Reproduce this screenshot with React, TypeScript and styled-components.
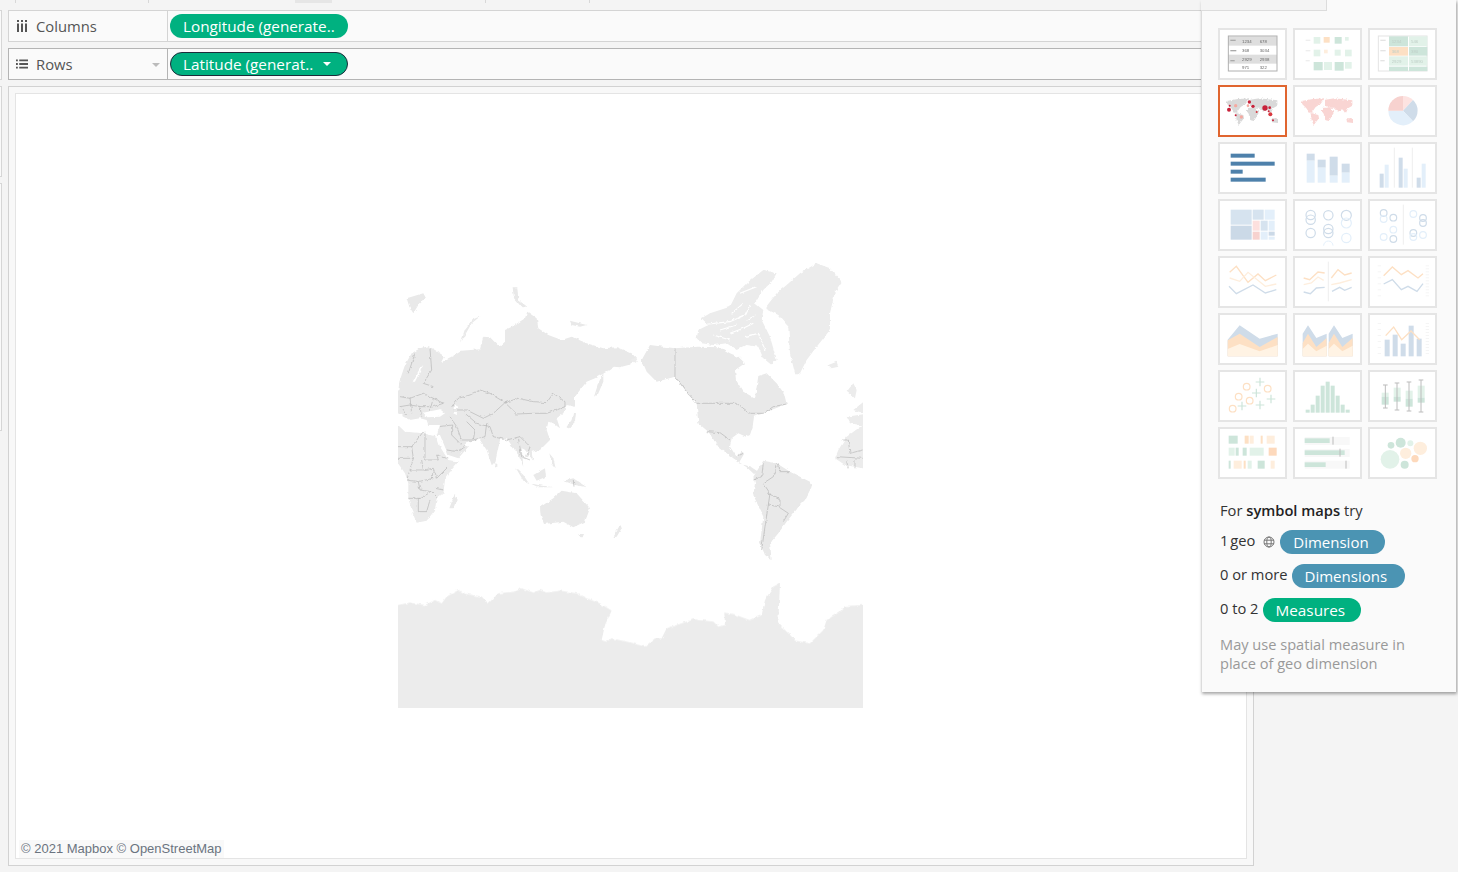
import React from 'react';
import styled, { createGlobalStyle } from 'styled-components';

const GlobalStyle = createGlobalStyle`
	html, body {
		margin: 0;
		padding: 0;
		background: #f4f4f4;
		font-family: "Open Sans", "Liberation Sans", sans-serif;
	}
`;

const Page = styled.div`
	position: relative;
	width: 1458px;
	height: 872px;
	overflow: hidden;
	background: #f4f4f4;
`;

const TopStrip = styled.div`
	display: flex;
	height: 10px;
`;

const TopCell = styled.div<{ $w: number }>`
	width: ${(p) => p.$w}px;
	height: 3px;
	box-sizing: border-box;
	border-right: 1px solid #d8d8d8;
`;

const TopMark = styled.div`
	width: 37px;
	height: 3px;
	margin-left: 146px;
	background: #e6e6e6;
`;

const Layout = styled.div`
	display: flex;
`;

const Rail = styled.div`
	width: 8px;
	display: flex;
	flex-direction: column;
	gap: 6px;
`;

const RailBlock = styled.div<{ $h: number }>`
	width: 2px;
	height: ${(p) => p.$h}px;
	box-sizing: border-box;
	background: #fafafa;
	border: 1px solid #d6d6d6;
	border-left: 0;
`;

const Main = styled.div`
	width: 1246px;
	display: flex;
	flex-direction: column;
	gap: 6px;
`;

const Shelf = styled.div<{ $active?: boolean }>`
	display: flex;
	height: 32px;
	box-sizing: border-box;
	background: #fafafa;
	border: 1px solid ${(p) => (p.$active ? '#b4b4b4' : '#d4d4d4')};
	border-right: 0;
`;

const ShelfLabel = styled.div<{ $active?: boolean }>`
	position: relative;
	width: 159px;
	box-sizing: border-box;
	display: flex;
	align-items: center;
	gap: 8px;
	padding-left: 7px;
	border-right: 1px solid ${(p) => (p.$active ? '#b4b4b4' : '#d4d4d4')};
	color: #555;
	font-size: 14.8px;
	svg {
		flex: none;
	}
`;

const Caret = styled.span`
	position: absolute;
	right: 7px;
	top: 14px;
	border-left: 4px solid transparent;
	border-right: 4px solid transparent;
	border-top: 4px solid #bbb;
`;

const ShelfBody = styled.div`
	flex: 1;
	display: flex;
	align-items: center;
	padding-left: 2px;
`;

const Pill = styled.div<{ $w: number; $blue?: boolean; $focus?: boolean }>`
	position: relative;
	width: ${(p) => p.$w}px;
	height: 24px;
	box-sizing: border-box;
	flex: none;
	display: flex;
	align-items: center;
	padding-left: ${(p) => (p.$focus ? 12 : 13)}px;
	border-radius: 12px;
	border: ${(p) => (p.$focus ? '1px solid #1d2b3a' : '0')};
	background: ${(p) => (p.$blue ? '#4b94b3' : '#00b180')};
	color: #fff;
	font-size: ${(p) => (p.$blue ? 15 : 15.3)}px;
	line-height: 24px;
	white-space: nowrap;
`;

const PillCaret = styled.span`
	position: absolute;
	right: 16px;
	top: 9px;
	border-left: 4px solid transparent;
	border-right: 4px solid transparent;
	border-top: 4px solid #fff;
`;

const Frame = styled.div`
	height: 780px;
	box-sizing: border-box;
	padding: 6px;
	border: 1px solid #d2d2d2;
	background: #f8f8f8;
`;

const Canvas = styled.div`
	position: relative;
	height: 100%;
	box-sizing: border-box;
	display: flex;
	justify-content: center;
	padding: 168px 2px 0 0;
	background: #fff;
	border: 1px solid #e4e4e4;
`;

const WorldMap = styled.svg`
	display: block;
	width: 465px;
	height: 446px;
`;

const Attribution = styled.div`
	position: absolute;
	left: 3px;
	bottom: 0;
	padding: 0 2px;
	background: #f9f9f9;
	color: #6b7480;
	font-family: "Liberation Sans", Arial, sans-serif;
	font-size: 13px;
	line-height: 18px;
`;

const ShowMe = styled.aside`
	position: absolute;
	left: 1201px;
	top: 0;
	width: 255px;
	height: 692px;
	box-sizing: border-box;
	padding: 28px 0 0 16px;
	background: #fafafa;
	border-left: 1px solid #dcdcdc;
	box-shadow: 1px 2px 3px rgba(0, 0, 0, 0.35);
`;

const ShowMeTab = styled.div`
	position: absolute;
	left: -1px;
	top: 0;
	width: 126px;
	height: 11px;
	box-sizing: border-box;
	background: #f4f4f4;
	border-right: 1px solid #dcdcdc;
	border-bottom: 1px solid #dcdcdc;
`;

const ThumbGrid = styled.div`
	display: grid;
	grid-template-columns: repeat(3, 69px);
	grid-auto-rows: 52px;
	column-gap: 6px;
	row-gap: 5px;
`;

const Tile = styled.div<{ $selected?: boolean }>`
	box-sizing: border-box;
	background: #fff;
	border: 2px solid ${(p) => (p.$selected ? '#e0652f' : '#e5e5e5')};
	svg {
		display: block;
		margin: -2px;
		width: 69px;
		height: 52px;
		filter: blur(0.35px);
	}
`;

const Hints = styled.div`
	margin-top: 19px;
	padding-left: 2px;
	display: flex;
	flex-direction: column;
	gap: 10px;
	color: #333;
	font-size: 14.7px;
`;

const HintRow = styled.div`
	display: flex;
	align-items: flex-start;
	gap: 4px;
	height: 24px;
	line-height: 21px;
	white-space: nowrap;
	b {
		font-weight: 600;
		color: #222;
	}
`;

const HintTitle = styled(HintRow)`
	display: block;
	line-height: 24px;
	margin-bottom: -2px;
`;

const GeoLabel = styled.span`
	word-spacing: -2px;
`;

const GeoIcon = styled.svg`
	width: 12px;
	height: 12px;
	margin: 6px 1px 0 4px;
`;

const Note = styled.div`
	margin-top: 3px;
	color: #999;
	font-size: 14.6px;
	line-height: 19px;
`;

const land = '#e9e9e9';
const line = '#a9a9a9';

// shapes are traced in 3x crop space, then scaled down with the group transform
const eurasia =
	'M0,432 L24,432 L28,395 L45,345 L65,310 L90,295 L115,288 L135,300 L165,320 L155,340 L175,325 L195,315 L215,302 L270,298 L280,260 L300,262 L328,290 L345,275 L345,240 L370,228 L405,205 L412,185 L440,205 L445,235 L475,255 L515,270 L545,260 L590,280 L640,295 L680,292 L725,310 L742,328 L715,345 L690,352 L672,350 L650,365 L615,385 L590,395 L570,420 L555,440 L555,470 L530,465 L520,490 L500,505 L510,535 L490,520 L475,515 L470,540 L480,570 L450,600 L425,605 L430,632 L405,600 L395,590 L400,650 L385,615 L350,565 L330,570 L315,640 L305,645 L290,600 L270,570 L235,575 L222,585 L235,590 L205,625 L175,615 L150,555 L140,555 L150,525 L115,525 L110,510 L90,505 L60,510 L40,500 L24,490 L0,490 Z';
const africa =
	'M0,525 L24,525 L45,545 L100,550 L140,560 L150,590 L175,630 L205,635 L180,665 L165,690 L160,730 L140,745 L135,780 L110,812 L80,818 L68,790 L55,745 L55,700 L45,670 L24,640 L0,640 Z';
const asiaIslands = [
	'M530,530 L545,510 L550,485 L558,490 L555,515 L535,538 Z',
	'M612,440 L625,400 L640,368 L640,395 L625,430 Z',
	'M212,280 L225,240 L250,208 L272,198 L245,220 L228,250 Z',
	'M50,145 L100,130 L108,145 L85,165 L70,190 L58,170 Z',
	'M368,112 L382,112 L385,150 L412,170 L395,172 L372,145 Z',
	'M540,212 L590,225 L570,230 L545,225 Z',
	'M316,640 L322,642 L322,655 L316,652 Z',
	'M178,775 L195,730 L202,745 L190,775 Z',
	'M478,610 L490,625 L497,655 L485,640 Z',
	'M430,675 L465,655 L468,680 L440,692 Z',
	'M378,655 L400,675 L418,702 L402,695 Z',
	'M420,700 L445,705 L490,712 L445,712 Z',
	'M520,692 L550,685 L590,712 L555,705 Z',
	'M450,772 L490,745 L515,722 L560,730 L600,775 L585,815 L550,832 L520,815 L462,822 L452,795 Z',
	'M568,852 L582,852 L578,862 L572,862 Z',
	'M670,862 L692,825 L695,835 L680,860 Z',
];
const asiaBorders =
	'M185,470 L205,445 L240,435 L270,420 L300,430 L345,458 L385,445 L430,455 L470,458 L490,430 L525,455 L525,470 L500,480 L470,490 L430,490 L380,492 L345,458 M190,480 L230,480 L280,505 L310,490 L345,458 M225,490 L260,520 L300,530 L310,560 L350,570 L390,560 L420,590 L410,620 M180,500 L200,530 L215,570 L250,570 L255,540 L230,515 M250,570 L285,560 L290,520 M150,530 L185,525 L185,555 L215,585 M170,600 L205,605 L225,590 M75,310 L55,370 M120,295 L125,360 L100,400 L130,410 M30,440 L60,445 L100,430 L130,445 L160,460 L130,470 L90,470 L60,465 L30,470 M60,445 L65,490 M90,470 L95,500 M130,445 L120,480 M30,470 L50,495 M385,565 L395,620 L420,630 M550,690 L552,710';
const africaBorders =
	'M24,590 L65,590 L100,545 M105,548 L105,630 L145,630 L140,615 L170,625 M65,590 L70,625 L24,625 M70,625 L60,660 L100,660 L95,630 M100,660 L130,655 L140,685 L175,650 M60,660 L50,690 L85,695 L130,685 M85,695 L90,720 L125,725 L140,740 M55,745 L90,745 L125,725 M85,745 L85,785 L110,785 L120,750 M135,715 L160,720 M130,660 L125,690';
const northAmerica =
	'M35,330 L60,285 L135,295 L205,290 L270,292 L300,310 L325,320 L345,340 L315,360 L318,390 L340,425 L375,445 L385,378 L410,370 L440,400 L462,430 L470,462 L430,478 L400,490 L372,500 L368,530 L360,555 L348,560 L325,550 L305,565 L300,590 L320,620 L335,605 L342,612 L326,640 L362,650 L385,665 L372,672 L350,652 L310,625 L265,590 L235,545 L205,520 L200,460 L170,430 L135,380 L80,395 L50,365 Z';
const southAmerica =
	'M370,680 L400,632 L440,640 L480,665 L540,695 L545,710 L525,750 L510,765 L470,815 L445,850 L420,880 L425,930 L405,915 L390,880 L400,800 L370,735 L375,700 Z';
const arctic = [
	'M405,175 L440,130 L470,105 L510,70 L560,40 L600,55 L635,95 L615,125 L600,190 L600,240 L560,290 L530,330 L510,370 L495,370 L480,310 L475,230 L445,195 Z',
	'M200,265 L205,240 L235,225 L215,205 L240,190 L300,170 L320,130 L350,100 L400,60 L440,70 L425,95 L400,120 L375,160 L400,180 L395,210 L420,260 L440,330 L425,345 L400,325 L385,290 L350,285 L320,300 L290,280 L250,285 L215,280 Z',
	'M595,345 L620,335 L625,350 L605,355 Z',
	'M650,425 L670,400 L680,420 L675,445 Z',
	'M650,500 L720,490 L720,530 L660,520 Z',
	'M670,480 L720,440 L720,495 Z',
	'M720,525 L698,525 L650,560 L625,600 L615,625 L645,645 L698,655 L720,655 Z',
	'M0,330 L18,322 L20,340 Z',
];
const arcticCuts =
	'M210,225 L300,215 L345,195 L360,165 M300,250 L340,235 L370,220 M330,130 L380,110 M250,255 L300,270 M345,260 L385,250 L405,300 M305,190 L340,160 M270,240 L320,225 M350,210 L380,195';
const americaBorders =
	'M135,295 L135,380 L170,425 L200,460 L320,460 L360,490 L400,490 L430,470 L470,462 M230,545 L270,548 L300,570 M320,620 L340,610 M400,640 L395,680 L370,690 M440,640 L430,680 L400,700 L420,730 L415,765 L445,770 L475,790 L460,815 M415,765 L405,830 L395,900 M445,640 L450,665 L480,665 M415,730 L450,750 L450,770 M635,570 L655,570 L660,610 L698,600 M620,620 L698,625 M650,630 L655,655 M675,630 L675,655';
const antarctica =
	'M0,105 L24,105 L60,98 L105,105 L135,90 L155,100 L170,80 L205,60 L230,72 L275,80 L295,100 L325,70 L375,65 L395,55 L430,68 L450,60 L470,68 L510,62 L560,70 L590,85 L630,100 L665,122 L645,165 L635,210 L650,215 L665,205 L710,215 L765,230 L795,205 L815,205 L830,175 L875,160 L910,148 L970,155 L985,170 L1005,165 L1003,128 L1030,132 L1080,150 L1115,135 L1125,90 L1150,50 L1170,40 L1165,160 L1205,200 L1215,212 L1260,220 L1300,180 L1310,150 L1350,125 L1365,108 L1418,105 L1500,105 L1500,500 L0,500 Z';

const box = (x: number, y: number, w: number, h: number, fill: string) => (
	<rect key={`${x}-${y}-${w}`} x={x} y={y} width={w} height={h} fill={fill} />
);

const ring = (cx: number, cy: number, r: number, stroke: string) => (
	<circle key={`${cx}-${cy}-${r}`} cx={cx} cy={cy} r={r} fill="none" stroke={stroke} strokeWidth={3.6} />
);

const dot = (cx: number, cy: number, r: number, fill: string) => (
	<circle key={`${cx}-${cy}-${r}`} cx={cx} cy={cy} r={r} fill={fill} />
);

const trace = (points: string, stroke: string) => (
	<polyline key={points} points={points} fill="none" stroke={stroke} strokeWidth={4} />
);

const area = (d: string, fill: string) => <polygon key={d} points={d} fill={fill} />;

const rule = (x: number, y1: number, y2: number, stroke: string, w = 3) => (
	<line key={`${x}-${y1}`} x1={x} x2={x} y1={y1} y2={y2} stroke={stroke} strokeWidth={w} />
);

const ticks = (x: number, step: number) =>
	Array.from({ length: Math.floor(92 / step) + 1 }, (_, i) => (
		<rect key={`${x}-${i}`} x={x} y={0} width={10} height={1.5} fill="#eaeaea" transform={`translate(0 ${i * step})`} />
	));

const blue1 = '#cfdce9';
const blue2 = '#e3effa';
const green1 = '#cde5da';
const green2 = '#e2f2e9';
const orange1 = '#fde0c4';
const orange2 = '#feeedd';

const MiniWorld = ({ fill }: { fill: string }) => (
	<g fill={fill} filter="url(#mini-rough)">
		<path d="M25,48 L60,42 L95,40 L82,58 L68,66 L58,80 L50,84 L40,70 L28,58 Z" />
		<path d="M52,84 L76,90 L78,100 L62,120 L56,106 Z" />
		<path d="M96,44 L125,40 L178,46 L178,62 L165,70 L158,86 L148,72 L135,80 L125,68 L105,68 L96,60 Z" />
		<path d="M88,68 L112,68 L122,84 L108,108 L98,106 L92,86 L86,78 Z" />
		<path d="M160,100 L180,100 L180,114 L162,112 Z" />
	</g>
);

const thumbs: { ox: number; oy: number; body: React.ReactNode; selected?: boolean }[] = [
	{
		ox: 55, oy: 85,
		body: (
			<g fontFamily="Liberation Sans, sans-serif" fontSize={13} fill="#666">
				{box(85, 110, 147, 28, '#dedede')}
				{box(85, 165, 147, 27, '#dedede')}
				<rect x={86} y={109} width={146} height={105} fill="none" stroke="#b0b0b0" strokeWidth={3} />
				{box(92, 120, 16, 4, '#aaa')}
				{box(92, 151, 18, 4, '#aaa')}
				{box(92, 181, 13, 4, '#aaa')}
				<text x={127} y={129}>1234</text>
				<text x={180} y={129}>678</text>
				<text x={127} y={157}>368</text>
				<text x={180} y={157}>3034</text>
				<text x={127} y={184}>2929</text>
				<text x={180} y={184}>2938</text>
				<text x={127} y={208}>971</text>
				<text x={180} y={208}>322</text>
			</g>
		),
	},
	{
		ox: 280, oy: 85,
		body: [
			box(318, 120, 14, 4, '#eee'), box(318, 151, 14, 4, '#eee'), box(318, 181, 12, 4, '#eee'),
			box(342, 112, 20, 20, green2), box(372, 112, 18, 17, orange1), box(405, 112, 21, 20, green1), box(436, 112, 11, 11, green2),
			box(342, 150, 20, 20, green2), box(373, 150, 11, 11, orange2), box(405, 150, 18, 18, green2), box(436, 150, 20, 20, green2),
			box(342, 187, 27, 25, green1), box(373, 187, 24, 24, green2), box(405, 187, 27, 26, green1), box(436, 187, 20, 20, green2),
		],
	},
	{
		ox: 505, oy: 85,
		body: (
			<g fontFamily="Liberation Sans, sans-serif" fontSize={13} fill="#bfcfc7">
				<rect x={536} y={109} width={146} height={105} fill="none" stroke="#e4e4e4" strokeWidth={3} />
				{box(542, 120, 16, 4, '#e4e4e4')}
				{box(542, 151, 16, 4, '#e4e4e4')}
				{box(542, 181, 13, 4, '#e4e4e4')}
				{box(568, 110, 57, 30, green1)}
				{box(628, 110, 55, 30, green2)}
				{box(568, 142, 57, 26, orange1)}
				{box(628, 142, 55, 26, green1)}
				{box(568, 170, 57, 28, green2)}
				{box(628, 170, 55, 28, green2)}
				{box(568, 201, 57, 13, green1)}
				{box(628, 201, 55, 13, green1)}
				<text x={576} y={129}>1234</text>
				<text x={634} y={129}>546</text>
				<text x={576} y={159}>368</text>
				<text x={634} y={159}>380</text>
				<text x={576} y={189}>2929</text>
				<text x={634} y={189}>53890</text>
			</g>
		),
	},
	{
		ox: 0, oy: 0, selected: true,
		body: (
			<>
				<MiniWorld fill="#d9d9d9" />
				{[
					dot(33, 74, 6, '#c8223a'), dot(35, 62, 3, '#c8223a'), dot(53, 62, 5, '#f5a9a0'),
					dot(94, 51, 5, '#c8223a'), dot(90, 62, 4, '#f5a9a0'), dot(105, 64, 5, '#c8223a'),
					dot(141, 69, 8, '#c8223a'), dot(155, 68, 4, '#c8223a'), dot(116, 81, 3, '#d8383f'),
					dot(152, 79, 3, '#c8223a'), dot(157, 88, 6, '#d8383f'), dot(53, 91, 3, '#c8223a'),
					dot(70, 96, 5, '#f5a9a0'), dot(165, 106, 3, '#c8223a'),
				]}
			</>
		),
	},
	{ ox: 0, oy: 0, body: <MiniWorld fill="#f9d5d3" /> },
	{
		ox: 505, oy: 256,
		body: (
			<>
				<path d="M610,333 L610,289 A44,44 0 0 1 640,301 Z" fill="#fde3e1" />
				<path d="M610,333 L640,301 A44,44 0 0 1 640,365 Z" fill={blue1} />
				<path d="M610,333 L640,365 A44,44 0 0 1 566,333 Z" fill={blue2} />
				<path d="M610,333 L566,333 A44,44 0 0 1 610,289 Z" fill="#f7d2cf" />
			</>
		),
	},
	{
		ox: 55, oy: 427,
		body: [box(93, 462, 72, 12, '#4e81ab'), box(93, 486, 132, 12, '#4e81ab'), box(93, 510, 36, 12, '#4e81ab'), box(93, 534, 105, 12, '#4e81ab')],
	},
	{
		ox: 280, oy: 427,
		body: [
			box(321, 462, 24, 21, blue1), box(321, 483, 24, 66, blue2),
			box(354, 480, 24, 24, blue1), box(354, 504, 24, 45, blue2),
			box(390, 471, 24, 57, blue1), box(390, 528, 24, 21, blue2),
			box(426, 492, 24, 27, blue1), box(426, 519, 24, 30, blue2),
		],
	},
	{
		ox: 505, oy: 427,
		body: [
			box(540, 522, 12, 42, blue1), box(555, 495, 12, 69, blue2), rule(584, 444, 564, '#eee'),
			box(597, 474, 12, 90, blue1), box(612, 507, 12, 57, blue2), rule(638, 444, 564, '#eee'),
			box(651, 534, 12, 30, blue1), box(666, 492, 12, 72, blue2),
		],
	},
	{
		ox: 55, oy: 28,
		body: [
			box(93, 60, 63, 45, '#d6e3ef'), box(93, 108, 63, 42, '#cbd9e7'), box(159, 60, 33, 30, '#d6e3ef'), box(195, 60, 30, 30, blue2),
			box(159, 93, 21, 30, '#fde0de'), box(183, 93, 21, 30, '#d6e3ef'), box(207, 93, 18, 30, blue2), box(159, 126, 21, 24, '#f7d2cf'),
			box(183, 126, 21, 24, blue2), box(207, 126, 18, 12, '#cbd9e7'), box(207, 141, 18, 9, blue2),
		],
	},
	{
		ox: 280, oy: 28,
		body: [
			ring(333, 76, 14, blue1), ring(333, 90, 14, blue1), ring(386, 77, 14, blue1), ring(440, 77, 15, blue1), ring(440, 100, 15, blue2),
			ring(333, 130, 14, blue1), ring(386, 118, 14, blue1), ring(386, 130, 14, blue1), ring(440, 145, 14, blue2),
			<path key="arc" d="M372,168 A14,14 0 0 1 400,168" fill="none" stroke={blue2} strokeWidth={3} />,
		],
	},
	{
		ox: 505, oy: 28,
		body: [
			ring(552, 70, 10, blue1), ring(552, 88, 10, blue2), ring(581, 84, 10, blue1), ring(581, 120, 10, blue2), ring(581, 148, 10, blue1), ring(552, 142, 10, blue2),
			rule(611, 45, 165, '#eee'),
			ring(641, 73, 10, blue2), ring(670, 85, 10, blue1), ring(670, 100, 10, blue1), ring(641, 130, 10, blue1), ring(641, 142, 10, blue2), ring(670, 136, 10, blue2),
		],
	},
	{
		ox: 55, oy: 199,
		body: [
			trace('90,248 110,230 145,278 175,253 197,273 230,256', orange1),
			trace('90,265 120,275 145,248 197,290 230,283', orange2),
			trace('88,290 110,312 160,286 197,310 230,300', blue1),
		],
	},
	{
		ox: 280, oy: 199,
		body: [
			rule(386, 216, 335, '#eee'),
			trace('312,265 330,270 355,247 375,250', orange1),
			trace('312,285 335,280 355,262 372,272', orange2),
			trace('312,307 332,312 350,295 375,293', blue1),
			trace('395,265 415,240 435,256 456,250', orange1),
			trace('395,285 420,280 456,270', orange2),
			trace('397,305 420,293 435,302 456,293', blue1),
		],
	},
	{
		ox: 505, oy: 199,
		body: (
			<>
				<g transform="translate(0 228)">{ticks(534, 18)}{ticks(678, 9)}</g>
				{trace('552,258 578,232 605,255 625,243 655,265 670,252', orange1)}
				{trace('552,283 578,270 605,300 625,290 652,305 670,282', blue1)}
			</>
		),
	},
	{
		ox: 55, oy: 370,
		body: [
			area('84,450 120,407 180,447 234,432 234,500 84,500', blue1),
			area('84,452 120,432 180,472 234,442 234,500 84,500', orange1),
			area('84,478 120,463 180,485 234,466 234,500 84,500', '#fff3e4'),
		],
	},
	{
		ox: 280, oy: 370,
		body: [
			area('309,432 325,407 350,445 381,432 381,500 309,500', blue1),
			area('309,460 325,432 350,472 381,445 381,500 309,500', orange1),
			area('309,478 325,462 350,485 381,468 381,500 309,500', '#fff3e4'),
			area('387,432 403,407 428,445 459,432 459,500 387,500', blue1),
			area('387,460 403,432 428,472 459,445 459,500 387,500', orange1),
			area('387,478 403,462 428,485 459,468 459,500 387,500', '#fff3e4'),
		],
	},
	{
		ox: 505, oy: 370,
		body: (
			<>
				<g transform="translate(0 400)">{ticks(534, 18)}{ticks(678, 9)}</g>
				{box(555, 450, 15, 50, blue1)}
				{box(579, 435, 15, 65, blue1)}
				{box(603, 462, 15, 38, blue1)}
				{box(627, 408, 15, 92, blue1)}
				{box(651, 447, 15, 53, blue1)}
				{trace('558,438 582,412 606,450 634,424 660,450', orange1)}
			</>
		),
	},
	{
		ox: 55, oy: 31,
		body: [
			ring(141, 81, 10, orange1), ring(117, 111, 10, orange1), ring(204, 87, 10, orange1), ring(150, 123, 10, orange1), ring(99, 147, 10, orange1),
			...[[181, 67], [170, 100], [214, 118], [127, 139], [181, 136]].map(([x, y]) => (
				<path key={`c${x}`} d={`M${x - 13},${y} H${x + 13} M${x},${y - 13} V${y + 13}`} stroke={green1} strokeWidth={3.6} />
			)),
		],
	},
	{
		ox: 280, oy: 31,
		body: [150, 135, 108, 78, 66, 78, 108, 135, 150].map((top, i) => box(318 + i * 15, top, 12, 159 - top, green1)),
	},
	{
		ox: 505, oy: 31,
		body: [
			box(546, 99, 21, 12, green2), box(546, 111, 21, 24, green1),
			box(582, 84, 21, 27, green2), box(582, 111, 21, 15, green1),
			box(618, 93, 21, 24, green2), box(618, 117, 21, 24, green1),
			box(654, 78, 21, 36, green2), box(654, 114, 21, 15, green1),
			...[[557, 76, 145], [592, 70, 151], [628, 67, 154], [664, 61, 157]].map(([x, a, b]) => (
				<path key={`w${x}`} d={`M${x - 7},${a} H${x + 7} M${x},${a} V${b} M${x - 7},${b} H${x + 7}`} fill="none" stroke="#bcbcbc" strokeWidth={3} />
			)),
		],
	},
	{
		ox: 55, oy: 202,
		body: [
			box(87, 228, 27, 24, green1), box(135, 228, 12, 24, orange1), box(150, 228, 12, 24, orange2), box(183, 228, 6, 24, orange1), box(201, 228, 24, 24, orange2),
			box(87, 264, 18, 24, green2), box(108, 264, 9, 24, green1), box(129, 264, 12, 24, green1), box(150, 264, 42, 24, green2), box(207, 264, 24, 24, '#fdd9bc'),
			box(87, 303, 6, 24, green1), box(102, 303, 24, 24, orange2), box(132, 303, 6, 24, orange1), box(144, 303, 12, 24, green2), box(174, 303, 21, 24, green1), box(213, 303, 12, 24, orange2),
		],
	},
	{
		ox: 280, oy: 202,
		body: [
			box(315, 232, 135, 24, '#f8f8f8'), box(315, 268, 135, 24, '#f8f8f8'), box(315, 303, 135, 24, '#f8f8f8'),
			box(315, 236, 75, 14, green1), box(315, 272, 120, 14, green1), box(315, 308, 63, 14, green1),
			rule(400, 231, 255, '#bcbcbc'), rule(421, 267, 291, '#bcbcbc'), rule(439, 303, 327, '#bcbcbc'),
		],
	},
	{
		ox: 505, oy: 202,
		body: [
			dot(571, 299, 28, green2), dot(574, 257, 10, green1), dot(603, 249, 15, green1), dot(632, 251, 9, green2),
			dot(618, 281, 17, orange2), dot(662, 266, 20, orange2), dot(646, 297, 11, '#fdd9bc'), dot(615, 315, 12, green1),
		],
	},
];

const ColumnsIcon = () => (
	<svg width="12" height="12" viewBox="0 0 12 12" fill="#555">
		<path d="M1,0h2v2h-2z M5,0h2v2h-2z M9,0h2v2h-2z M1,3.5h2v8.5h-2z M5,3.5h2v8.5h-2z M9,3.5h2v8.5h-2z" />
	</svg>
);

const RowsIcon = () => (
	<svg width="12" height="10" viewBox="0 0 13 10" fill="#555">
		<path d="M0,0h2v2h-2z M3.5,0h9.5v2h-9.5z M0,4h2v2h-2z M3.5,4h9.5v2h-9.5z M0,8h2v2h-2z M3.5,8h9.5v2h-9.5z" />
	</svg>
);

const App = () => {
	return (
		<Page>
			<GlobalStyle />
			<TopStrip>
				<TopCell $w={16} />
				<TopCell $w={133} />
				<TopMark />
				<TopCell $w={154} />
				<TopCell $w={104} />
			</TopStrip>
			<Layout>
				<Rail>
					<RailBlock $h={70} />
					<RailBlock $h={91} />
					<RailBlock $h={248} />
				</Rail>
				<Main>
					<Shelf>
						<ShelfLabel>
							<ColumnsIcon />
							Columns
						</ShelfLabel>
						<ShelfBody>
							<Pill $w={178}>Longitude (generate..</Pill>
						</ShelfBody>
					</Shelf>
					<Shelf $active>
						<ShelfLabel $active>
							<RowsIcon />
							Rows
							<Caret />
						</ShelfLabel>
						<ShelfBody>
							<Pill $w={178} $focus>
								Latitude (generat..
								<PillCaret />
							</Pill>
						</ShelfBody>
					</Shelf>
					<Frame>
						<Canvas>
							<WorldMap viewBox="398 262 465 446">
								<defs>
									<filter id="rough" filterUnits="userSpaceOnUse" x="380" y="240" width="500" height="490">
										<feTurbulence type="fractalNoise" baseFrequency="0.22" numOctaves="2" seed="4" />
										<feDisplacementMap in="SourceGraphic" scale="3.2" xChannelSelector="R" yChannelSelector="G" />
										<feGaussianBlur stdDeviation="0.3" />
									</filter>
									<filter id="mini-rough" x="-10%" y="-10%" width="120%" height="120%">
										<feTurbulence type="fractalNoise" baseFrequency="0.16" numOctaves="2" seed="7" />
										<feDisplacementMap in="SourceGraphic" scale="9" xChannelSelector="R" yChannelSelector="G" />
									</filter>
								</defs>
								<g filter="url(#rough)">
									<g transform="translate(390 250) scale(0.3333)">
										<path d={eurasia} fill={land} />
										<path d={africa} fill="#ebebeb" />
										{asiaIslands.map((d) => (
											<path key={d} d={d} fill={land} />
										))}
										<path d="M100,488 L150,478 L165,490 L150,500 L112,502 Z M192,465 L202,470 L200,495 L190,490 Z M90,355 L100,345 L75,395 L68,395 Z" fill="#fff" />
										<path d={asiaBorders} fill="none" stroke={line} strokeWidth={1.6} />
										<path d={africaBorders} fill="none" stroke={line} strokeWidth={1.6} />
									</g>
									<g transform="translate(630 250) scale(0.3333)">
										<path d={northAmerica} fill={land} />
										<path d={southAmerica} fill={land} />
										{arctic.map((d) => (
											<path key={d} d={d} fill="#ececec" />
										))}
										<path d={arcticCuts} fill="none" stroke="#fff" strokeWidth={3.5} />
										<path d={americaBorders} fill="none" stroke={line} strokeWidth={1.6} />
									</g>
									<g transform="translate(390 570) scale(0.3333)">
										<path d={antarctica} fill="#ececec" />
									</g>
								</g>
							</WorldMap>
							<Attribution>© 2021 Mapbox © OpenStreetMap</Attribution>
						</Canvas>
					</Frame>
				</Main>
			</Layout>
			<ShowMe>
				<ShowMeTab />
				<ThumbGrid>
					{thumbs.map((t, i) => (
						<Tile key={i} $selected={t.selected}>
							<svg viewBox="0 0 207 156">
								<g transform={`translate(${-t.ox} ${-t.oy})`}>{t.body}</g>
							</svg>
						</Tile>
					))}
				</ThumbGrid>
				<Hints>
					<HintTitle>
						For <b>symbol maps</b> try
					</HintTitle>
					<HintRow>
						<GeoLabel>1 geo</GeoLabel>
						<GeoIcon viewBox="0 0 12 12" fill="none" stroke="#777" strokeWidth="1">
							<circle cx="6" cy="6" r="5" />
							<ellipse cx="6" cy="6" rx="2.2" ry="5" />
							<path d="M1,4.2H11M1,7.8H11" />
						</GeoIcon>
						<Pill $w={105} $blue>Dimension</Pill>
					</HintRow>
					<HintRow>
						0 or more
						<Pill $w={113} $blue>Dimensions</Pill>
					</HintRow>
					<HintRow>
						0 to 2
						<Pill $w={98}>Measures</Pill>
					</HintRow>
					<Note>
						May use spatial measure in
						<br />
						place of geo dimension
					</Note>
				</Hints>
			</ShowMe>
		</Page>
	);
};

export default App;
